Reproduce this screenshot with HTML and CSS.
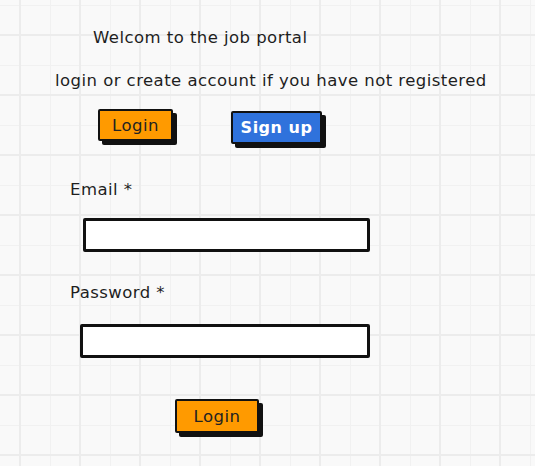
FILE: index.html
```html
<!DOCTYPE html>
<html>
<head>
<meta charset="utf-8">
<link rel="stylesheet" href="styles.css">
</head>
<body>
<main class="page">
  <p class="title">Welcom to the job portal</p>
  <p class="subtitle">login or create account if you have not registered</p>
  <div class="actions">
    <button class="btn btn-orange">Login</button>
    <button class="btn btn-blue">Sign up</button>
  </div>
  <form class="form">
    <label class="label label-email">Email *</label>
    <div class="input input-email"></div>
    <label class="label label-pass">Password *</label>
    <div class="input input-pass"></div>
    <button type="button" class="btn btn-orange btn-submit">Login</button>
  </form>
</main>
</body>
</html>
```
FILE: styles.css
```css
html, body {
  margin: 0;
  padding: 0;
}
body {
  width: 535px;
  height: 466px;
  overflow: hidden;
  font-family: "DejaVu Sans", "Open Sans", sans-serif;
  letter-spacing: 0.45px;
  color: #1e1e1e;
  background-color: #f9f9f9;
  background-image:
    linear-gradient(to right, #ececec 2px, transparent 2px),
    linear-gradient(to bottom, #ececec 2px, transparent 2px),
    linear-gradient(to right, #f1f1f1 1px, transparent 1px),
    linear-gradient(to bottom, #f1f1f1 1px, transparent 1px);
  background-size: 60px 60px, 60px 60px, 30px 30px, 30px 30px;
  background-position: 19px 0, 0 34px, 20px 0, 0 5px;
}
.page {
  display: flex;
  flex-direction: column;
  align-items: flex-start;
  padding-top: 27px;
}
.title {
  margin: 0 0 0 93px;
  font-size: 16.5px;
  line-height: 22px;
}
.subtitle {
  margin: 21px 0 0 55px;
  font-size: 16.5px;
  line-height: 22px;
}
.actions {
  display: flex;
  gap: 58px;
  margin: 17px 0 0 98px;
  align-items: flex-start;
}
.btn {
  font-family: inherit;
  letter-spacing: 0.5px;
  border: 2.5px solid #111;
  border-radius: 2px;
  padding: 0;
  font-size: 16.5px;
  line-height: 27px;
  cursor: pointer;
  box-shadow: 4px 4px 0 #111;
}
.btn-orange {
  background: #ff9a00;
  color: #222;
  width: 75px;
  height: 32px;
}
.btn-blue {
  margin-top: 2px;
  background: #2f72dc;
  color: #fff;
  font-size: 16px;
  font-weight: 600;
  width: 91px;
  height: 33px;
}
.form {
  display: flex;
  flex-direction: column;
  align-items: flex-start;
  margin: 0;
}
.label {
  font-size: 16.5px;
  line-height: 22px;
  margin-left: 70px;
}
.label-email {
  margin-top: 35px;
}
.input {
  background: #fff;
  border: 3px solid #111;
  border-radius: 2px;
  height: 28px;
  box-sizing: content-box;
}
.input-email {
  margin: 17px 0 0 83px;
  width: 281px;
}
.label-pass {
  margin-top: 30px;
}
.input-pass {
  margin: 20px 0 0 80px;
  width: 284px;
}
.btn-submit {
  margin: 41px 0 0 175px;
  width: 84px;
  height: 34px;
}
```
